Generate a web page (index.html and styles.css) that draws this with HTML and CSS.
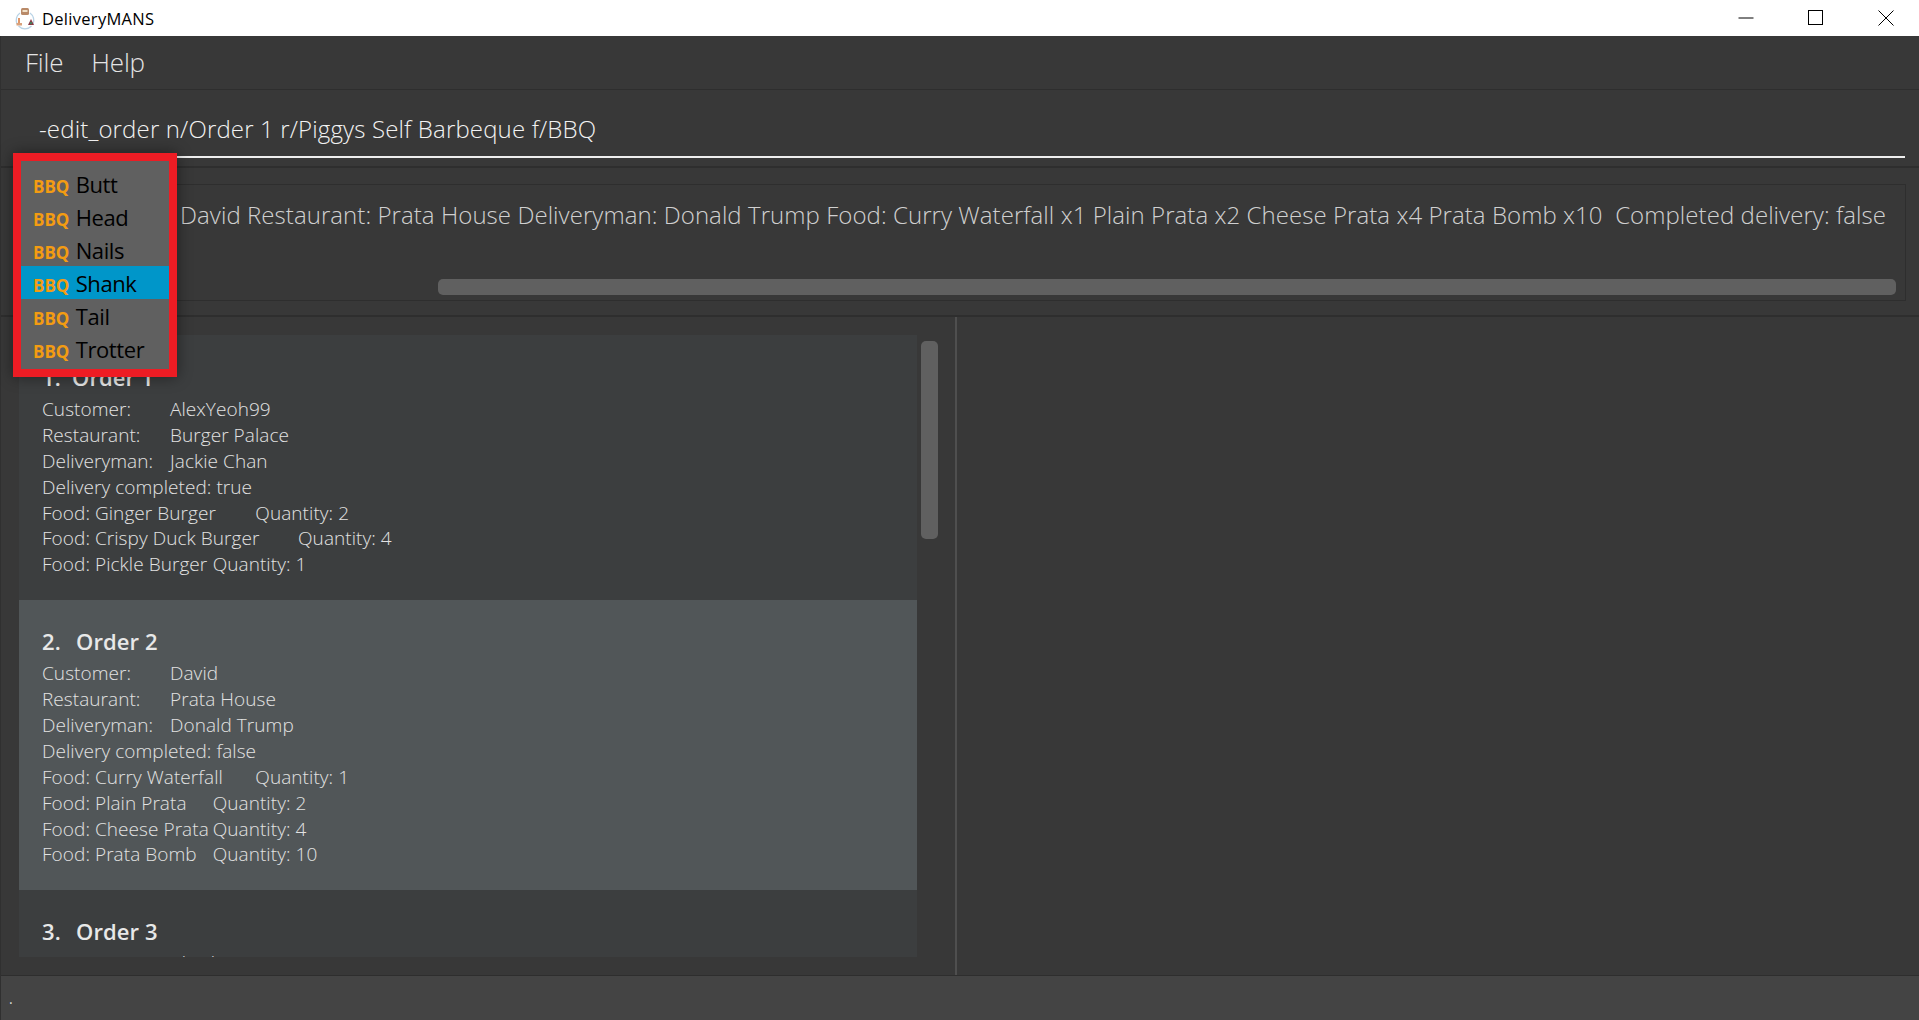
FILE: index.html
```html
<!DOCTYPE html>
<html lang="en">
<head>
    <meta charset="UTF-8">
    <meta name="viewport" content="width=device-width, initial-scale=1.0">
    <title>DeliveryMANS</title>
    <link rel="stylesheet" href="styles.css">
</head>
<body>
    <div class="window">
        <div class="titlebar">
            <svg class="app-icon" width="22" height="24" viewBox="0 0 22 24">
                <path d="M6 7A9 9 0 0 0 3 18M4.5 20A9 9 0 0 0 17.500 20M19 18A9 9 0 0 0 16 7" fill="none" stroke="#b9d3e6" stroke-width="1.3"/>
                <rect x="7" y="2" width="8" height="7" rx="1.500" fill="#b98a68"/>
                <rect x="8.500" y="4" width="5" height="2" fill="#f0e0c8"/>
                <rect x="4" y="12" width="2" height="5" fill="#e0976a"/>
                <rect x="2.500" y="17" width="5.500" height="2.500" fill="#d9a27c"/>
                <path d="M14 19l3-6 3 6z" fill="#8a3a44"/>
                <circle cx="17" cy="17" r="1.200" fill="#4a7a5a"/>
            </svg>
            <span class="app-name">DeliveryMANS</span>
            <div class="controls">
                <svg width="16" height="16" viewBox="0 0 16 16"><path d="M0.5 8h15" stroke="#000" fill="none"/></svg>
                <svg width="16" height="16" viewBox="0 0 16 16"><rect x="0.5" y="0.5" width="14" height="14" stroke="#000" fill="none"/></svg>
                <svg width="16" height="16" viewBox="0 0 16 16"><path d="M0.5 0.5l15 15M15.5 0.5l-15 15" stroke="#000" fill="none"/></svg>
            </div>
        </div>

        <div class="menubar">
            <span class="menu-item">File</span>
            <span class="menu-item">Help</span>
        </div>

        <div class="command-panel">
            <div class="command-input">-edit_order n/Order 1 r/Piggys Self Barbeque f/BBQ</div>
        </div>

        <div class="result-panel">
            <div class="result-box">
                <div class="result-text"><span>Customer: David Restaurant: Prata House Deliveryman: Donald Trump Food: Curry Waterfall x1 Plain Prata x2 Cheese Prata x4 Prata Bomb x10&nbsp; Completed delivery: false</span></div>
                <div class="h-track"><div class="h-thumb"></div></div>
            </div>
        </div>

        <div class="main">
            <div class="list-pane">
                <div class="order-list">
                    <div class="card">
                        <div class="card-title"><span class="card-num">1.</span>Order 1</div>
                        <div class="line">Customer:	AlexYeoh99</div>
                        <div class="line">Restaurant:	Burger Palace</div>
                        <div class="line">Deliveryman:	Jackie Chan</div>
                        <div class="line">Delivery completed: true</div>
                        <div class="line">Food: Ginger Burger	Quantity: 2</div>
                        <div class="line">Food: Crispy Duck Burger	Quantity: 4</div>
                        <div class="line">Food: Pickle Burger	Quantity: 1</div>
                    </div>
                    <div class="card selected">
                        <div class="card-title"><span class="card-num">2.</span>Order 2</div>
                        <div class="line">Customer:	David</div>
                        <div class="line">Restaurant:	Prata House</div>
                        <div class="line">Deliveryman:	Donald Trump</div>
                        <div class="line">Delivery completed: false</div>
                        <div class="line">Food: Curry Waterfall	Quantity: 1</div>
                        <div class="line">Food: Plain Prata	Quantity: 2</div>
                        <div class="line">Food: Cheese Prata	Quantity: 4</div>
                        <div class="line">Food: Prata Bomb	Quantity: 10</div>
                    </div>
                    <div class="card">
                        <div class="card-title"><span class="card-num">3.</span>Order 3</div>
                        <div class="line">Customer:	Charlie Lee</div>
                    </div>
                </div>
                <div class="v-track"><div class="v-thumb"></div></div>
            </div>
            <div class="detail-pane"></div>
        </div>

        <div class="statusbar">.</div>

        <div class="popup">
            <div class="popup-row"><b>BBQ</b> Butt</div>
            <div class="popup-row"><b>BBQ</b> Head</div>
            <div class="popup-row"><b>BBQ</b> Nails</div>
            <div class="popup-row active"><b>BBQ</b> Shank</div>
            <div class="popup-row"><b>BBQ</b> Tail</div>
            <div class="popup-row"><b>BBQ</b> Trotter</div>
        </div>
    </div>
</body>
</html>
```

FILE: styles.css
```css
* {
    box-sizing: border-box;
}
html, body {
    margin: 0;
    height: 100%;
    overflow: hidden;
}
body {
    background-color: #383838;
    font-family: "Open Sans", "Noto Sans", sans-serif;
}
.window {
    position: relative;
    display: flex;
    flex-direction: column;
    height: 100vh;
    border-left: 1px solid #303030;
}

/* title bar */
.titlebar {
    display: flex;
    align-items: center;
    flex: 0 0 36px;
    margin-left: -1px;
    padding-left: 14px;
    background-color: #fff;
    color: #000;
}
.app-icon {
    flex: none;
}
.app-name {
    margin-left: 6px;
    font-size: 16.5px;
    letter-spacing: 0.3px;
}
.controls {
    display: flex;
    gap: 54px;
    margin-left: auto;
    padding-right: 25px;
}

/* menu */
.menubar {
    display: flex;
    align-items: center;
    flex: 0 0 54px;
    gap: 28px;
    padding: 0 0 2px 24px;
    border-bottom: 1px solid #2e2e2e;
}
.menu-item {
    font-size: 26px;
    font-weight: 300;
    letter-spacing: -0.2px;
    color: #e4e4e4;
}

/* command box */
.command-panel {
    flex: 0 0 78px;
    padding: 20px 14px 8px 25px;
    border-bottom: 2px solid #2e2e2e;
}
.command-input {
    height: 48px;
    padding-left: 13px;
    font-size: 24px;
    font-weight: 300;
    letter-spacing: 0.15px;
    line-height: 38px;
    color: #f2f2f2;
    border-bottom: 2px solid #eee;
}

/* result display */
.result-panel {
    flex: 0 0 149px;
    padding: 16px 13px 14px 18px;
    border-bottom: 2px solid #2e2e2e;
}
.result-box {
    display: flex;
    flex-direction: column;
    height: 117px;
    border: 1px solid #2e2e2e;
}
.result-text {
    display: flex;
    justify-content: flex-end;
    flex: 1;
    overflow: hidden;
    padding: 14px 19px 0 0;
    font-size: 24px;
    font-weight: 300;
    letter-spacing: 0.06px;
    line-height: 32px;
    white-space: nowrap;
    color: #d0d0d0;
}
.h-track {
    padding: 0 9px 5px 418px;
}
.h-thumb {
    height: 16px;
    border-radius: 5px;
    background-color: #606060;
}

/* order list */
.main {
    display: flex;
    flex: 1;
    min-height: 0;
    border-bottom: 1px solid #2e2e2e;
}
.list-pane {
    display: flex;
    flex: 0 0 956px;
    padding: 18px 0 18px 18px;
    border-right: 2px solid #4f4f4f;
}
.order-list {
    flex: 0 0 898px;
    overflow: hidden;
}
.card {
    padding: 27px 0 23px 23px;
    background-color: #3c3e3f;
    color: #e2e2e2;
}
.card:first-child {
    padding-top: 28px;
}
.card.selected {
    background-color: #515658;
}
.card-title {
    height: 28px;
    margin-bottom: 5px;
    font-size: 22px;
    font-weight: 600;
    letter-spacing: 0.1px;
    line-height: 28px;
    color: #e8e8e8;
}
.card-num {
    display: inline-block;
    width: 34px;
}
.card:first-child .card-num {
    width: 30px;
}
.line {
    height: 25.9px;
    font-size: 19px;
    letter-spacing: 0.06px;
    font-weight: 300;
    line-height: 26px;
    white-space: pre;
    tab-size: 42.67px;
}
.v-track {
    flex: 0 0 17px;
    margin: 6px 0 0 4px;
}
.v-thumb {
    height: 198px;
    border-radius: 5px;
    background-color: #606060;
}
.detail-pane {
    flex: 1;
}

/* status bar */
.statusbar {
    flex: 0 0 44px;
    padding: 14px 0 0 8px;
    font-size: 14px;
    line-height: 18px;
    background-color: #444;
    color: #ddd;
}

/* autocomplete popup */
.popup {
    position: absolute;
    top: 153px;
    left: 12px;
    width: 164px;
    height: 224px;
    padding: 6px 0 4px;
    border: 8px solid #ed1c24;
    background-color: #606060;
    box-shadow: 0 0 14px rgba(0, 0, 0, 0.45);
}
.popup-row {
    height: 33px;
    padding-left: 12px;
    font-size: 22px;
    letter-spacing: -0.4px;
    line-height: 35px;
    white-space: nowrap;
    color: #000;
}
.popup-row b {
    font-size: 17px;
    font-weight: 700;
    letter-spacing: 0;
    margin-right: 1px;
    color: #f39c12;
}
.popup-row.active {
    background-color: #0096c9;
}
```
